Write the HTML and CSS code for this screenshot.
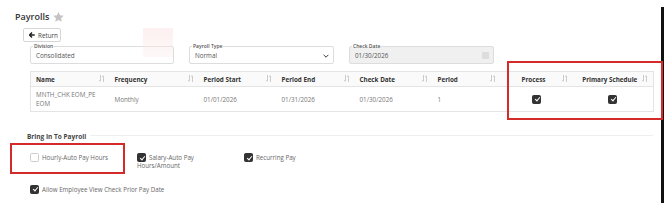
FILE: index.html
```html
<!DOCTYPE html>
<html lang="en">
<head>
    <meta charset="UTF-8">
    <title>Payrolls</title>
    <link rel="stylesheet" href="styles.css">
</head>
<body>
    <div class="page">
        <div class="title-row">
            <h1>Payrolls</h1>
            <svg class="star" width="11" height="10" viewBox="0 0 24 23"><path d="M12 0l3.6 7.6 8.4 1-6.2 5.8 1.6 8.3L12 18.6l-7.4 4.1 1.6-8.3L0 8.6l8.4-1z" fill="#c4c4c4"/></svg>
        </div>

        <button class="btn-return">
            <svg width="6" height="6" viewBox="0 0 10 10"><path d="M5 1L1 5l4 4M1.5 5H9.5" stroke="#222" stroke-width="2.4" fill="none"/></svg>
            Return
        </button>

        <div class="fields">
            <div class="field">
                <span class="field-label">Division</span>
                <span class="field-value">Consolidated</span>
            </div>
            <div class="field">
                <span class="field-label">Payroll Type</span>
                <span class="field-value">Normal</span>
                <svg class="chevron" width="6" height="4" viewBox="0 0 10 6"><path d="M1 1l4 4 4-4" stroke="#333" stroke-width="1.6" fill="none"/></svg>
            </div>
            <div class="field disabled">
                <span class="field-label">Check Date</span>
                <span class="field-value">01/30/2026</span>
                <span class="cal"></span>
            </div>
        </div>

        <table class="grid">
            <thead>
                <tr>
                    <th class="c-name"><span class="th-text">Name</span><span class="sort"></span></th>
                    <th class="c-freq"><span class="th-text">Frequency</span><span class="sort"></span></th>
                    <th class="c-date"><span class="th-text">Period Start</span><span class="sort"></span></th>
                    <th class="c-date"><span class="th-text">Period End</span><span class="sort"></span></th>
                    <th class="c-date"><span class="th-text">Check Date</span><span class="sort"></span></th>
                    <th class="c-period"><span class="th-text">Period</span><span class="sort"></span></th>
                    <th class="c-process center"><span class="th-text">Process</span><span class="sort"></span></th>
                    <th class="c-primary center"><span class="th-text">Primary Schedule</span><span class="sort"></span></th>
                </tr>
            </thead>
            <tbody>
                <tr>
                    <td>MNTH_CHK EOM_PE EOM</td>
                    <td>Monthly</td>
                    <td>01/01/2026</td>
                    <td>01/31/2026</td>
                    <td>01/30/2026</td>
                    <td>1</td>
                    <td class="center"><span class="box checked"></span></td>
                    <td class="center"><span class="box checked"></span></td>
                </tr>
            </tbody>
        </table>

        <div class="section-head"><span>Bring In To Payroll</span></div>

        <div class="checks">
            <label class="check"><span class="box"></span>Hourly-Auto Pay Hours</label>
            <label class="check"><span class="box checked"></span>Salary-Auto Pay Hours/Amount</label>
            <label class="check"><span class="box checked"></span>Recurring Pay</label>
        </div>

        <label class="check allow"><span class="box checked"></span>Allow Employee View Check Prior Pay Date</label>

        <div class="blush"></div>
        <div class="highlight hl-table"></div>
        <div class="highlight hl-hourly"></div>
    </div>
</body>
</html>
```

FILE: styles.css
```css
/* Base */
body {
    margin: 0;
    background: #fff;
    font-family: 'Open Sans', sans-serif;
    color: #666;
}

.page {
    position: relative;
    width: 661px;
    height: 196px;
    margin-top: 7px;
    border-right: 3px solid #111;
}

/* Title */
.title-row {
    display: flex;
    align-items: center;
    gap: 4px;
    padding-top: 4px;
    margin-left: 15px;
    height: 12px;
}

.title-row h1 {
    margin: 0;
    font-size: 9px;
    line-height: 12px;
    font-weight: 600;
    color: #333;
}

.btn-return {
    display: flex;
    align-items: center;
    gap: 3px;
    margin: 5px 0 0 23px;
    width: 38px;
    height: 14px;
    padding: 0 0 0 5px;
    background: #fff;
    border: 1px solid #d6d6d6;
    border-radius: 2px;
    font-family: inherit;
    font-size: 6.3px;
    color: #444;
}

/* Form fields */
.fields {
    display: flex;
    gap: 15px;
    margin: 4px 0 0 30px;
}

.field {
    position: relative;
    display: flex;
    align-items: center;
    box-sizing: border-box;
    width: 145px;
    height: 18px;
    padding: 1px 5px 0;
    border: 1px solid #ddd;
    border-radius: 2px;
}

.field:first-child {
    width: 144px;
}

.field-label {
    position: absolute;
    top: -4px;
    left: 2px;
    padding: 0 1px;
    background: #fff;
    font-size: 5px;
    line-height: 7px;
    font-weight: 600;
    color: #555;
}

.field-value {
    flex: 1;
    font-size: 6.3px;
    color: #555;
}

.field.disabled {
    background: #f0f0f0;
}

.field.disabled .field-label {
    background: linear-gradient(#fff 50%, #f0f0f0 50%);
}

.cal {
    width: 7px;
    height: 7px;
    background: #ddd;
    border-radius: 1px;
    margin-right: -1px;
}

.chevron {
    margin-right: -1px;
}

/* Table */
.grid {
    margin: 7px 0 0 30px;
    width: 623px;
    border-collapse: collapse;
    table-layout: fixed;
    border: 1px solid #e4e4e4;
    font-size: 6.3px;
}

.grid th,
.grid td {
    box-sizing: border-box;
    padding: 0 5px;
    vertical-align: middle;
}

.grid th {
    height: 15px;
    background: #fafafa;
    border-bottom: 1px solid #e4e4e4;
    color: #333;
    font-weight: 700;
    text-align: left;
    white-space: nowrap;
}

.grid th .th-text {
    display: inline-block;
    vertical-align: middle;
}

/* two thin arrows, down then up */
.grid th .sort {
    position: relative;
    float: right;
    width: 6px;
    height: 7px;
    margin-top: 1px;
    background:
        linear-gradient(#ccc, #ccc) 1px 0 / 1px 6px no-repeat,
        linear-gradient(#ccc, #ccc) 4px 1px / 1px 6px no-repeat;
}

.grid th .sort::before,
.grid th .sort::after {
    content: "";
    position: absolute;
    width: 0;
    height: 0;
    border-left: 1.5px solid transparent;
    border-right: 1.5px solid transparent;
}

.grid th .sort::before {
    left: 0;
    top: 5px;
    border-top: 2px solid #ccc;
}

.grid th .sort::after {
    left: 3px;
    top: 0;
    border-bottom: 2px solid #ccc;
}

.grid th.center .th-text {
    width: calc(100% - 6px);
    text-align: center;
}

.grid td {
    height: 25px;
    color: #777;
    line-height: 9px;
}

.grid .center {
    text-align: center;
}

.c-name { width: 79px; }
.c-freq { width: 89px; }
.c-date { width: 78px; }
.c-period { width: 68px; }
.c-process { width: 72px; }
.c-primary { width: 81px; }

/* Checkboxes */
.box {
    display: inline-block;
    box-sizing: border-box;
    width: 9px;
    height: 9px;
    margin-right: 3px;
    vertical-align: -2.5px;
    border: 1px solid #ccc;
    border-radius: 1.5px;
    background: #fff;
}

.box.checked {
    position: relative;
    border-color: #333;
    background: #333;
}

.box.checked::after {
    content: "";
    position: absolute;
    left: 2.5px;
    top: 0.5px;
    width: 2px;
    height: 4px;
    border: solid #fff;
    border-width: 0 1.2px 1.2px 0;
    transform: rotate(40deg);
}

.grid .box {
    margin: 0;
    vertical-align: middle;
}

/* Section */
.section-head {
    display: flex;
    align-items: center;
    margin: 19px 0 0 27px;
    width: 626px;
    height: 10px;
    font-size: 6.5px;
    font-weight: 700;
    color: #444;
}

.section-head::after {
    content: "";
    flex: 1;
    height: 1px;
    margin: -1px 0 0 4px;
    background: #eee;
}

.checks {
    display: flex;
    margin: 12px 0 0 30px;
}

.check {
    display: block;
    width: 85px;
    margin-right: 22px;
    font-size: 6.2px;
    line-height: 8.5px;
    color: #666;
}

.allow {
    width: 300px;
    margin: 14px 0 0 30px;
}

/* Annotations */
.highlight {
    position: absolute;
    border: 2px solid #d42a2a;
}

.hl-table {
    left: 507px;
    top: 54px;
    width: 152px;
    height: 55px;
}

.hl-hourly {
    left: 10px;
    top: 136px;
    width: 111px;
    height: 27px;
}

.blush {
    position: absolute;
    left: 143px;
    top: 21px;
    width: 30px;
    height: 29px;
    background: linear-gradient(180deg, rgba(250, 225, 225, 0.5), rgba(252, 235, 235, 0.35));
}
```
